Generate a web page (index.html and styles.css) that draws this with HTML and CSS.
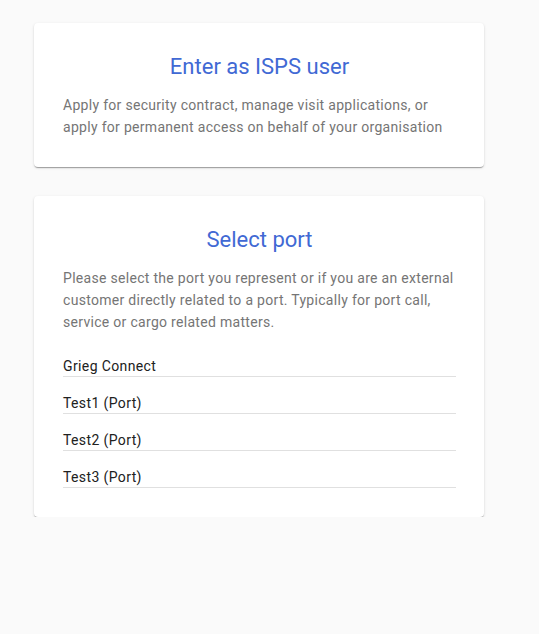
FILE: index.html
```html
<!DOCTYPE html>
<html lang="en">
<head>
<meta charset="utf-8">
<title>Login</title>
<link rel="stylesheet" href="styles.css">
</head>
<body>
<main class="page">
  <section class="card">
    <h1 class="card-title">Enter as ISPS user</h1>
    <p class="card-text">Apply for security contract, manage visit applications, or apply for permanent access on behalf of your organisation</p>
  </section>
  <section class="card">
    <h1 class="card-title">Select port</h1>
    <p class="card-text">Please select the port you represent or if you are an external customer directly related to a port. Typically for port call, service or cargo related matters.</p>
    <ul class="port-list">
      <li class="port-item">Grieg Connect</li>
      <li class="port-item">Test1 (Port)</li>
      <li class="port-item">Test2 (Port)</li>
      <li class="port-item">Test3 (Port)</li>
    </ul>
  </section>
</main>
</body>
</html>
```
FILE: styles.css
```css
html, body {
  margin: 0;
  padding: 0;
  background: #fafafa;
  font-family: Roboto, "Liberation Sans", Arial, sans-serif;
}
.page {
  display: flex;
  flex-direction: column;
  gap: 29px;
  width: 450px;
  padding: 23px 0 0 34px;
}
.card {
  background: #fff;
  border-radius: 4px;
  padding: 28px 28px 29px 29px;
  box-shadow: 0 2px 1px -1px rgba(0,0,0,.2), 0 1px 1px 0 rgba(0,0,0,.14), 0 1px 3px 0 rgba(0,0,0,.12);
}
.card-title {
  margin: 0;
  font-size: 22px;
  line-height: 32px;
  font-weight: 400;
  color: #4169d4;
  text-align: center;
}
.card-text {
  margin: 11px 0 0;
  font-size: 14px;
  line-height: 22px;
  color: #757575;
  letter-spacing: 0.3px;
}
.port-list {
  list-style: none;
  margin: 7px 0 0;
  padding: 0;
}
.port-item {
  padding-top: 16px;
  font-size: 14px;
  line-height: 20px;
  color: #212121;
  letter-spacing: 0.38px;
  border-bottom: 1px solid #e0e0e0;
}
```
